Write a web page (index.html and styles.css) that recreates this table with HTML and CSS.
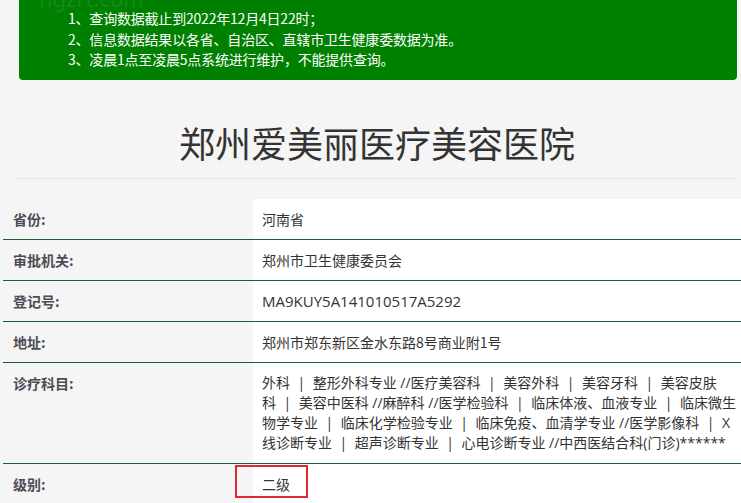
FILE: index.html
```html
<!DOCTYPE html>
<html lang="zh-CN">
<head>
<meta charset="utf-8">
<title>郑州爱美丽医疗美容医院</title>
<link rel="stylesheet" href="styles.css">
</head>
<body>
<div class="page">
  <div class="notice">
    <span class="watermark">ngzrt.com</span>
    <p>1、查询数据截止到2022年12月4日22时；</p>
    <p>2、信息数据结果以各省、自治区、直辖市卫生健康委数据为准。</p>
    <p>3、凌晨1点至凌晨5点系统进行维护，不能提供查询。</p>
  </div>
  <h1 class="title">郑州爱美丽医疗美容医院</h1>
  <div class="info">
    <div class="row">
      <div class="label">省份:</div>
      <div class="value">河南省</div>
    </div>
    <div class="row">
      <div class="label">审批机关:</div>
      <div class="value">郑州市卫生健康委员会</div>
    </div>
    <div class="row">
      <div class="label">登记号:</div>
      <div class="value value--code">MA9KUY5A141010517A5292</div>
    </div>
    <div class="row">
      <div class="label">地址:</div>
      <div class="value">郑州市郑东新区金水东路8号商业附1号</div>
    </div>
    <div class="row">
      <div class="label">诊疗科目:</div>
      <div class="value value--multi">外科&#8288;<span class="sep">|</span>&#8288;整形外科专业 //医疗美容科&#8288;<span class="sep">|</span>&#8288;美容外科&#8288;<span class="sep">|</span>&#8288;美容牙科&#8288;<span class="sep">|</span>&#8288;美容皮肤科&#8288;<span class="sep">|</span>&#8288;美容中医科 //麻醉科 //医学检验科&#8288;<span class="sep">|</span>&#8288;临床体液、血液专业&#8288;<span class="sep">|</span>&#8288;临床微生物学专业&#8288;<span class="sep">|</span>&#8288;临床化学检验专业&#8288;<span class="sep">|</span>&#8288;临床免疫、血清学专业 //医学影像科&#8288;<span class="sep">|</span>&#8288;X线诊断专业&#8288;<span class="sep">|</span>&#8288;超声诊断专业&#8288;<span class="sep">|</span>&#8288;心电诊断专业 //中西医结合科(门诊)******</div>
    </div>
    <div class="row row--last">
      <div class="label">级别:</div>
      <div class="value value--level"><span class="mark"></span>二级</div>
    </div>
  </div>
</div>
</body>
</html>
```
FILE: styles.css
```css
html, body {
  margin: 0;
  padding: 0;
  background: #f5f5f5;
}
body {
  font-family: "Open Sans", "Noto Sans CJK SC", sans-serif;
  color: #333;
  overflow: hidden;
}
.page {
  display: flex;
  flex-direction: column;
}
.notice {
  position: relative;
  margin: -12px 4px 0 19px;
  padding: 20px 0 10px 49px;
  background: #008000;
  border-radius: 4px;
  color: #fff;
  font-size: 14px;
  line-height: 20.5px;
  overflow: hidden;
}
.notice p {
  margin: 0;
  font-family: "Noto Sans CJK SC", sans-serif;
  letter-spacing: -0.2px;
}
.watermark {
  position: absolute;
  left: 20px;
  top: -2px;
  font-family: "Noto Sans", sans-serif;
  font-size: 22px;
  line-height: 24px;
  color: rgba(255, 255, 255, 0.1);
}
.title {
  margin: 42px 4px 0 17px;
  padding-bottom: 16px;
  border-bottom: 1px solid #e4e4e4;
  text-align: center;
  font-family: "Noto Sans CJK SC", sans-serif;
  font-weight: 400;
  font-size: 36px;
  line-height: 40px;
  color: #333;
}
.info {
  margin: 20px 0 0 3px;
  display: flex;
  flex-direction: column;
}
.row {
  display: grid;
  grid-template-columns: 250px 1fr;
  border-bottom: 1px solid #1f5a3c;
}
.row--last {
  border-bottom: none;
}
.label {
  padding: 10px 10px;
  font-family: "Noto Sans CJK SC", sans-serif;
  font-size: 14px;
  line-height: 20px;
  font-weight: 700;
  color: #4c4c55;
}
.value {
  position: relative;
  padding: 10px 2px 10px 9px;
  background: #fff;
  font-family: "Noto Sans CJK SC", sans-serif;
  font-size: 14px;
  line-height: 20px;
  color: #333;
}
.value--code {
  font-family: "Open Sans", sans-serif;
  font-size: 15px;
}
.value--multi {
  font-family: "Open Sans", "Noto Sans CJK SC", sans-serif;
}
.sep {
  padding: 0 7.5px;
  color: #333;
}
.mark {
  position: absolute;
  left: -18px;
  top: 1px;
  width: 73px;
  height: 33px;
  border: 2px solid #e0282e;
  box-sizing: border-box;
}
```
